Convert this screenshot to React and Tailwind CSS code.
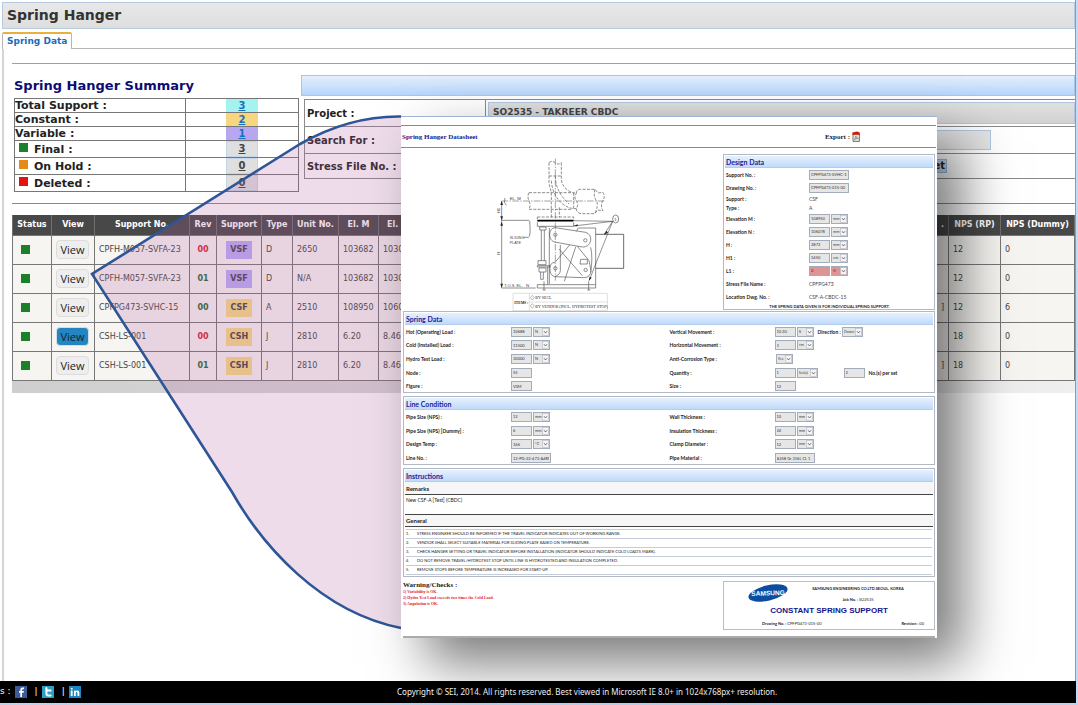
import React from "react";

const SUMMARY = [
  { label: "Total Support :", value: "3", tone: "bg-[#a4f3f0] text-[#1a6fc0]" },
  { label: "Constant :", value: "2", tone: "bg-[#f6d77f] text-[#1a6fc0]" },
  { label: "Variable :", value: "1", tone: "bg-[#b9a6f3] text-[#1a6fc0]" },
];

const STATES = [
  { label: "Final :", value: "3", dot: "bg-[#1e7f2c]" },
  { label: "On Hold :", value: "0", dot: "bg-[#e68a17]" },
  { label: "Deleted :", value: "0", dot: "bg-[#e01414]" },
];

const ROWS = [
  { no: "CPFH-M057-SVFA-23", rev: "00", red: true, sup: "VSF", type: "D", unit: "2650", m: "103682", n: "1030", dwg: "", rp: "12", dummy: "0" },
  { no: "CPFH-M057-SVFA-23", rev: "01", red: false, sup: "VSF", type: "D", unit: "N/A", m: "103682", n: "1030", dwg: "", rp: "12", dummy: "0" },
  { no: "CPFPG473-SVHC-15", rev: "00", red: false, sup: "CSF", type: "A", unit: "2510", m: "108950", n: "1060", dwg: "]", rp: "12", dummy: "6" },
  { no: "CSH-LS-001", rev: "00", red: true, sup: "CSH", type: "J", unit: "2810", m: "6.20", n: "8.46", dwg: "", rp: "18", dummy: "0", active: true },
  { no: "CSH-LS-001", rev: "01", red: false, sup: "CSH", type: "J", unit: "2810", m: "6.20", n: "8.46", dwg: "]", rp: "18", dummy: "0" },
];

const COLUMNS = [
  ["Status", "w-[39px] text-center"],
  ["View", "w-[43px] text-center"],
  ["Support No.", "w-[95px] text-center"],
  ["Rev", "w-[27px] text-center"],
  ["Support", "w-[45px] text-center"],
  ["Type", "w-[31px] text-center"],
  ["Unit No.", "w-[46px] text-center"],
  ["El. M", "w-[40px] text-center"],
  ["El.", "pl-2 text-left"],
  [".", "w-[30px] pr-1 text-right"],
  ["NPS (RP)", "w-[52px] text-center"],
  ["NPS (Dummy)", "w-[74px] text-center"],
];

const NOTES = [
  "STRESS ENGINEER SHOULD BE INFORMED IF THE TRAVEL INDICATOR INDICATES OUT OF WORKING RANGE.",
  "VENDOR SHALL SELECT SUITABLE MATERIAL FOR SLIDING PLATE BASED ON TEMPERATURE.",
  "CHECK HANGER SETTING OR TRAVEL INDICATOR BEFORE INSTALLATION (INDICATOR SHOULD INDICATE COLD LOAD'S MARK).",
  "DO NOT REMOVE TRAVEL/HYDROTEST STOP UNTIL LINE IS HYDROTESTED AND INSULATION COMPLETED.",
  "REMOVE STOPS BEFORE TEMPERATURE IS INCREASED FOR START-UP.",
];

function Box({ id, value, width = "w-[21px]", red }) {
  return (
    <input
      id={id}
      defaultValue={value}
      className={`h-[10px] ${width} border border-[#a3acba] px-px text-[4px] ${red ? "bg-[#df9494]" : "bg-[#e6e6e6]"} text-[#333]`}
    />
  );
}

function Pick({ label, value, width = "w-[17px]", red }) {
  return (
    <span className={`relative ml-px flex h-[10px] ${width}`}>
      <select
        aria-label={label}
        className={`w-full appearance-none border border-[#a3acba] pl-px text-[4px] ${red ? "bg-[#df9494]" : "bg-[#e6e6e6]"} text-[#444]`}
      >
        <option>{value}</option>
      </select>
      <svg viewBox="0 0 7 8" className="pointer-events-none absolute top-px right-px h-[8px] w-[7px]">
        <rect x="0.5" y="0.5" width="6" height="7" fill="#f4f4f4" stroke="#b4bac4" strokeWidth="0.6" />
        <path d="M2 3.2 3.5 5 5 3.2" fill="none" stroke="#555" strokeWidth="0.8" />
      </svg>
    </span>
  );
}

function Field({ id, label, value, width, unit, unitWidth, red, plain, labelWidth = "w-[105px]", children }) {
  return (
    <div className="flex items-center">
      {plain ? (
        <span className={`${labelWidth} shrink-0 font-bold`}>{label}</span>
      ) : (
        <label htmlFor={id} className={`${labelWidth} shrink-0 font-bold`}>
          {label}
        </label>
      )}
      {plain && value && <span className="text-[#444]">{value}</span>}
      {!plain && value && <Box id={id} value={value} width={width} red={red} />}
      {unit && <Pick label={`${label} unit`} value={unit} width={unitWidth} red={red} />}
      {children}
    </div>
  );
}

function Panel({ title, children, className = "" }) {
  return (
    <section className={`border border-[#b3b9c4] p-px ${className}`}>
      <h3 className="h-[12px] border-b border-[#b5cdec] bg-linear-to-b from-[#e6f1fd] to-[#c0dafb] pl-px text-[7px] leading-[12px] font-bold text-[#22229a]">
        {title}
      </h3>
      {children}
    </section>
  );
}

function Drawing() {
  return (
    <svg viewBox="0 0 450 480" className="h-[160px] w-[150px]" fill="none" stroke="#555" strokeWidth="2">
      <g strokeDasharray="9 4">
        <path d="M180 26V85C180 100 187 105 187 120V190M217 26V75C218 100 240 116 262 118" />
        <path d="M199 66C199 110 225 135 240 150M187 80C190 130 225 166 262 164" />
        <path d="M180 26q9-8 18 0q9 8 19 0M180 66h37" />
        <path d="M120 116H250M120 166H250M120 116q-6 12 0 25q6 12 0 25M254 116v50M211 160v30" />
        <path d="M262 118Q262 106 274 106H318L327 117L342 115Q350 130 340 142Q334 158 342 170L326 168L317 179H276Q262 176 262 164Q270 150 262 141Q254 130 262 118Z" />
        <path d="M145 189H254V200H145ZM318 106q-6 20 4 34q8 14-5 39" />
      </g>
      <path d="M199 14V380M38 141H350" strokeDasharray="20 4 4 4" strokeWidth="1.6" />
      <path d="M145 200h108" stroke="#000" strokeWidth="5" />
      <path d="M145 205V217H254V205M152 219h19v9h-19zM157 228V320M166 228V320M147 320h24v12h-24zM145 335h38v4h-38zM150 342h21v12h-21zM155 354v22h8v-22M176 338V392M181 222V390M145 392H320V402H145ZM320 222V392M268 222H320M268 222l-6 10" />
      <path d="M198 221L290 235Q307 240 305 260Q300 280 280 279L196 264Q181 258 182 240Q184 222 198 221Z" />
      <circle cx="199" cy="242" r="5" />
      <circle cx="289" cy="259" r="5" />
      <circle cx="199" cy="343" r="5" />
      <circle cx="290" cy="348" r="5" />
      <path d="M183 340Q184 326 198 325L242 273M183 340Q181 362 196 368L285 371Q305 370 306 350L300 320L265 277M214 273V350Q213 362 199 367M260 279L226 382M210 285L280 365M275 316h20v14h-22zM305 280Q312 310 305 355" />
      <path d="M320 241H404V343H320" stroke="#222" />
      <path d="M38 199H120M38 141V402M38 402H140M122 200Q126 250 118 250H104" />
      <path d="M371 202L254 216M371 202L254 200M371 202L346 240M371 202L301 378" stroke="#333" strokeWidth="1.6" />
      <path d="M254 216l12-5v6zM344 243l9-13 4 6zM299 382l3-14 6 3zM38 141l-4 12h8zM38 199l-4-12h8zM38 203l-4 12h8zM38 401l-4-12h8z" fill="#222" stroke="none" />
      <ellipse cx="380" cy="195" rx="9" ry="12" />
      <path d="M165 382V408M161 408h9M299 382V408M295 408h9M48 132q-6 14 4 22" />
      <g fill="#444" stroke="none" fontFamily="Liberation Sans" fontSize="13">
        <text x="62" y="138">EL. M</text>
        <text x="62" y="255" fontSize="11">SLIDING</text>
        <text x="62" y="269" fontSize="11">PLATE</text>
        <text x="46" y="398" fontSize="12">T.O.S. EL.</text>
        <text x="111" y="398">N</text>
        <text x="376" y="200">1</text>
        <text transform="translate(33 178) rotate(-90)">H1</text>
        <text transform="translate(33 302) rotate(-90)">H</text>
      </g>
      <g stroke="#d0d0d0">
        <path d="M72 418H355V470H72ZM121 418V470M121 444H355" />
      </g>
      <g stroke="#555" strokeWidth="1.2">
        <path d="M130 424l6 7-6 7-6-7zM130 449l6 7-6 7-6-7z" />
      </g>
      <g fill="#222" stroke="none" fontFamily="Liberation Serif" fontSize="12">
        <text x="76" y="450" fontWeight="bold" fontSize="11">ITEMS :</text>
        <text x="139" y="436">BY SECL</text>
        <text x="139" y="461">BY VENDOR (INCL. HYDROTEST STOP)</text>
      </g>
    </svg>
  );
}

function Datasheet() {
  return (
    <article
      aria-label="Spring Hanger Datasheet"
      className="absolute top-[116px] left-[401px] flex h-[522px] w-[536px] flex-col border-t border-[#9fb3d6] bg-white font-[Lato,sans-serif] text-[5px] leading-[8px] text-[#222] shadow-[25px_25px_50px_rgba(0,0,0,0.52)]"
    >
      <header className="mt-2 mr-px flex h-[23px] items-center justify-between border-y border-[#8a8a8a] font-['Liberation_Serif',serif]">
        <h2 className="pl-px text-[7px] font-bold text-[#22228c]">Spring Hanger Datasheet</h2>
        <button type="button" className="mr-[76px] flex items-center gap-[2px] text-[7px] font-bold text-[#222]">
          Export :
          <svg viewBox="0 0 8 11" className="h-[11px] w-[8px]">
            <path d="M1 3H7.4V10.4H1Z" fill="#e8e4e0" stroke="#555" strokeWidth="0.8" />
            <path d="M0.3 1.5 5 0.4 7.8 1.6V3.8H0.3Z" fill="#c4220f" />
            <path d="M2.4 8.6Q4 7 3.7 5Q4.6 7.6 6.3 7.4Q4.2 7.2 2.4 8.6" fill="none" stroke="#666" strokeWidth="0.6" />
          </svg>
        </button>
      </header>

      <div className="mt-[6px] mr-[2px] flex h-[156px]">
        <div className="flex flex-1 items-start justify-center pl-1">
          <Drawing />
        </div>
        <Panel title="Design Data" className="w-[212px]">
          <div className="flex flex-col pl-px [&>*:nth-child(-n+2)]:h-[13px] [&>*:nth-child(n+3)]:h-[9px] [&>*:nth-child(n+5)]:h-[13px] [&>*:nth-child(n+10)]:h-[10px]">
            <Field id="sno" label="Support No. :" value="CPFPG473-SVHC-15" width="w-[40px]" labelWidth="w-[83px]" />
            <Field id="dno" label="Drawing No. :" value="CPFPG473-015-00" width="w-[40px]" labelWidth="w-[83px]" />
            <Field plain label="Support :" value="CSF" labelWidth="w-[83px]" />
            <Field plain label="Type :" value="A" labelWidth="w-[83px]" />
            <Field id="elm" label="Elevation M :" value="108950" unit="mm" labelWidth="w-[83px]" />
            <Field id="eln" label="Elevation N :" value="106078" unit="mm" labelWidth="w-[83px]" />
            <Field id="h" label="H :" value="2872" unit="mm" labelWidth="w-[83px]" />
            <Field id="h1" label="H1 :" value="1450" unit="cm" labelWidth="w-[83px]" />
            <Field id="l1" label="L1 :" value="0" unit="ft" red labelWidth="w-[83px]" />
            <Field plain label="Stress File Name :" value="CPFPG473" labelWidth="w-[83px]" />
            <Field plain label="Location Dwg. No. :" value="CSF-A-CBDC-15" labelWidth="w-[83px]" />
            <p className="text-center text-[4px] font-bold">THE SPRING DATA GIVEN IS FOR INDIVIDUAL SPRING SUPPORT.</p>
          </div>
        </Panel>
      </div>

      <Panel title="Spring Data" className="mt-px mr-[2px] ml-[2px] h-[82px]">
        <div className="grid h-[68px] grid-cols-2 pl-px">
          <div className="grid grid-rows-5">
            <Field id="hot" label="Hot (Operating) Load :" value="10688" unit="N" />
            <Field id="cold" label="Cold (Installed) Load :" value="11500" unit="N" />
            <Field id="hyd" label="Hydro Test Load :" value="30000" unit="N" />
            <Field id="node" label="Node :" value="55" />
            <Field id="fig" label="Figure :" value="VSM" />
          </div>
          <div className="grid grid-rows-5">
            <Field id="ver" label="Vertical Movement :" value="10.30" unit="ft">
              <span className="ml-1 font-bold">Direction :</span>
              <Pick label="Direction" value="Down" width="w-[21px]" />
            </Field>
            <Field id="hor" label="Horizontal Movement :" value="3" unit="cm" />
            <Field plain label="Anti-Corrosion Type :" unit="Yes" />
            <Field id="qty" label="Quantity :" value="1" unit="Set(s)" unitWidth="w-[21px]">
              <span className="ml-[26px] flex">
                <Box id="per" value="2" />
              </span>
              <label htmlFor="per" className="ml-1 font-bold">
                No.(s) per set
              </label>
            </Field>
            <Field id="size" label="Size :" value="12" />
          </div>
        </div>
      </Panel>

      <Panel title="Line Condition" className="mx-[2px] mt-[3px] h-[69px]">
        <div className="grid h-[55px] grid-cols-2 pl-px">
          <div className="grid grid-rows-4">
            <Field id="nps" label="Pipe Size (NPS) :" value="12" unit="mm" />
            <Field id="npsd" label="Pipe Size (NPS) [Dummy] :" value="6" unit="mm" />
            <Field id="temp" label="Design Temp :" value="166" unit="°C" />
            <Field id="line" label="Line No. :" value="12-PG-22-473-A4RM-P" width="w-[40px]" />
          </div>
          <div className="grid grid-rows-4">
            <Field id="wall" label="Wall Thickness :" value="10" unit="mm" />
            <Field id="ins" label="Insulation Thickness :" value="24" unit="mm" />
            <Field id="clamp" label="Clamp Diameter :" value="12" unit="mm" />
            <Field id="mat" label="Pipe Material :" value="A358 Gr 316L CL 1" width="w-[40px]" />
          </div>
        </div>
      </Panel>

      <Panel title="Instructions" className="mx-[2px] mt-[3px] h-[109px]">
        <h4 className="h-[13px] border-b border-[#444] bg-[#f6f6f6] pl-px text-[6px] leading-[13px] font-bold">Remarks</h4>
        <p className="h-[19px] pt-px pl-px">New CSF-A [Test] (CBDC)</p>
        <h4 className="h-[13px] border-y border-[#444] bg-[#f6f6f6] pl-px text-[6px] leading-[11px] font-bold">General</h4>
        <ol className="mx-px mt-[2px] border-t border-[#c3ccd8]">
          {NOTES.map((note, i) => (
            <li key={note} className="flex h-[9px] items-center border-b border-[#c3ccd8] text-[4px]">
              <span className="w-[11px]">{i + 1}.</span>
              {note}
            </li>
          ))}
        </ol>
      </Panel>

      <div className="mt-[4px] mr-[2px] ml-[2px] flex flex-1 justify-between border-b-2 border-[#ababab]">
        <div className="font-['Liberation_Serif',serif] text-[4px] leading-[6px] font-bold text-[#e21d1d]">
          <h4 className="text-[7px] leading-[8px] text-[#222]">Warning/Checks :</h4>
          <p>1) Variability is OK.</p>
          <p>2) Hydro Test Load exceeds two times the Cold Load.</p>
          <p>3) Angulation is OK.</p>
        </div>
        <div className="flex h-[49px] w-[212px] flex-col border border-[#b8bec8] px-[6px] text-[4px] font-bold">
          <div className="flex h-[22px] pl-[18px]">
            <svg viewBox="0 0 40 20" className="mt-px h-[20px] w-[40px]">
              <ellipse cx="20" cy="10" rx="20" ry="7.6" fill="#0c4da2" transform="rotate(-13 20 10)" />
              <text x="20" y="12.4" textAnchor="middle" fontFamily="Liberation Sans" fontWeight="bold" fontSize="6.6" fill="#fff" transform="rotate(-2 20 10)">
                SAMSUNG
              </text>
            </svg>
            <div className="flex flex-1 flex-col items-center pt-px leading-[11px]">
              <span>SAMSUNG ENGINEERING CO.LTD.SEOUL, KOREA</span>
              <span>
                Job No. : <span className="font-normal">SO2535</span>
              </span>
            </div>
          </div>
          <strong className="text-center font-['Liberation_Sans',sans-serif] text-[8px] leading-[14px] text-[#14148c]">CONSTANT SPRING SUPPORT</strong>
          <div className="flex justify-between pr-[4px] pl-[32px] leading-[11px]">
            <span>
              Drawing No. : <span className="font-normal">CPFPG473-015-00</span>
            </span>
            <span>
              Revision : <span className="font-normal">00</span>
            </span>
          </div>
        </div>
      </div>
    </article>
  );
}

function Callout() {
  return (
    <svg className="pointer-events-none absolute top-0 left-0 h-[705px] w-[410px]" viewBox="0 0 410 705">
      <path
        d="M410 116H401C365 116 330 127 300 144L92 274L232 492C262 545 320 612 401 628H410Z"
        fill="rgb(178,96,159)"
        fillOpacity="0.22"
      />
      <path d="M401 116.5C365 116 330 127 300 144L92 274L232 492C262 545 320 612 401 628" fill="none" stroke="#2d5597" strokeWidth="2.6" />
    </svg>
  );
}

export default function App() {
  return (
    <div className="relative flex min-h-screen flex-col overflow-hidden bg-[#c5dbf5] font-['DejaVu_Sans',sans-serif] text-[#222]">
      <div className="mr-[2px] flex flex-1 flex-col border-r border-[#8c9bb0] bg-white pt-[2px] pl-[2px]">
        <header className="flex h-[27px] items-center border border-[#b5cbe2] bg-linear-to-b from-[#e8e8e8] to-[#dedede] pl-1">
          <h1 className="text-[14px] font-bold text-[#333]">Spring Hanger</h1>
        </header>
        <nav className="mt-[3px] flex h-[17px] items-stretch">
          <a href="#spring" className="flex items-center rounded-t-[2px] border-t-2 border-r border-l border-[#b5b5b5] border-t-[#e9b13c] px-1 text-[9px] font-bold text-[#1c6cb8]">
            Spring Data
          </a>
          <span className="flex-1 border-b border-[#b5b5b5]" />
        </nav>

        <main id="spring" className="flex flex-1 flex-col border-l-2 border-[#d5d5d5] pt-[14px] pl-2">
          <hr className="border-[#a0a0a0]" />
          <div className="mt-[11px] flex">
            <section className="w-[289px] pl-[2px]">
              <h2 className="h-[23px] text-[13px] leading-[22px] font-bold text-[#0c0c74]">Spring Hanger Summary</h2>
              <table className="w-[285px] table-fixed border-collapse text-[10px] leading-[13px] font-bold">
                <tbody>
                  {SUMMARY.map((r) => (
                    <tr key={r.label} className="h-[14px]">
                      <td className="w-[171px] border border-[#777] p-0 text-[11px]">{r.label}</td>
                      <td className="border border-[#777] p-0">
                        <a href="#list" className={`mx-auto block w-[32px] text-center underline ${r.tone}`}>
                          {r.value}
                        </a>
                      </td>
                    </tr>
                  ))}
                  {STATES.map((r) => (
                    <tr key={r.label} className="h-[17px]">
                      <td className="border border-[#777] p-0 text-[11px]">
                        <span className="flex items-center gap-[6px] pl-1">
                          <span className={`mb-[3px] h-[9px] w-[9px] ${r.dot}`} />
                          {r.label}
                        </span>
                      </td>
                      <td className="border border-[#777] p-0">
                        <a href="#list" className="mx-auto block w-[32px] border border-[#c3d5e6] bg-[#dfdfdf] text-center leading-[14px] text-[#444] underline">
                          {r.value}
                        </a>
                      </td>
                    </tr>
                  ))}
                </tbody>
              </table>
            </section>

            <section className="flex-1">
              <div className="h-[21px] border border-[#a9c6ea] bg-linear-to-b from-[#e3effd] to-[#b7d5fa]" />
              <form className="mt-[3px] ml-[3px] border-t border-l border-[#8a8a8a] text-[10px] font-bold">
                <div className="flex h-[27px] items-stretch border-b border-[#8a8a8a]">
                  <label htmlFor="project" className="flex w-[181px] items-center border-r border-[#8a8a8a] pl-[2px]">
                    Project :
                  </label>
                  <select id="project" className="my-[2px] ml-[2px] flex-1 appearance-none border border-[#b0c6e2] bg-linear-to-b from-[#e0e0e0] to-[#d2d2d2] pl-1 text-[9px] text-[#444]">
                    <option>SO2535 - TAKREER CBDC</option>
                  </select>
                </div>
                <div className="flex h-[27px] items-center border-b border-[#8a8a8a]">
                  <label htmlFor="search" className="w-[184px] pl-[2px]">
                    Search For :
                  </label>
                  <input id="search" className="mr-[84px] h-[20px] flex-1 border border-[#b0c6e2] bg-[#e4e4e4]" />
                </div>
                <div className="flex h-[25px] items-center border-b border-[#8a8a8a]">
                  <label htmlFor="stress" className="w-[184px] pl-[2px]">
                    Stress File No. :
                  </label>
                  <span className="flex-1" />
                  <button id="stress" type="button" className="mr-[128px] h-[14px] border border-[#9dbce0] bg-[#c9dcf3] px-px leading-[12px] font-bold">
                    et
                  </button>
                </div>
              </form>
            </section>
          </div>

          <hr className="mt-[11px] border-[#8a8a8a]" />

          <table id="list" className="mt-[11px] w-full table-fixed border-collapse text-[8px]">
            <thead>
              <tr className="h-[20px] bg-[#484848] text-white">
                {COLUMNS.map(([name, cls]) => (
                  <th key={name} className={`border-x border-[#707070] p-0 font-bold whitespace-nowrap ${cls}`}>
                    {name}
                  </th>
                ))}
              </tr>
            </thead>
            <tbody>
              {ROWS.map((r, i) => (
                <tr key={i} className="h-[29px] bg-[#f7f5f2] text-[#444] [&>td]:border [&>td]:border-[#777] [&>td]:px-1 [&>td]:py-0">
                  <td>
                    <span className="ml-1 block h-[9px] w-[9px] bg-[#1c7f2a]" />
                  </td>
                  <td>
                    <button
                      type="button"
                      className={`block h-[19px] w-[33px] rounded-[4px] border font-['Open_Sans',sans-serif] text-[11px] leading-[17px] ${
                        r.active ? "border-[#cfe0ee] bg-[#2485c1] text-[#123]" : "border-[#dcdcdc] bg-[#eeeeee] text-[#222]"
                      }`}
                    >
                      View
                    </button>
                  </td>
                  <td className="whitespace-nowrap">{r.no}</td>
                  <td className={`text-center font-bold ${r.red ? "text-[#dc2030]" : "text-[#1c6a34]"}`}>{r.rev}</td>
                  <td>
                    <span className={`mx-auto block h-[18px] w-[26px] text-center leading-[18px] font-bold ${r.sup === "VSF" ? "bg-[#baacf7]" : "bg-[#f7db86]"}`}>
                      {r.sup}
                    </span>
                  </td>
                  <td>{r.type}</td>
                  <td>{r.unit}</td>
                  <td>{r.m}</td>
                  <td>{r.n}</td>
                  <td className="text-right">{r.dwg}</td>
                  <td>{r.rp}</td>
                  <td>{r.dummy}</td>
                </tr>
              ))}
            </tbody>
          </table>
          <div className="h-[12px] bg-linear-to-r from-[#cecece] to-[#efefef]" />
        </main>
      </div>

      <footer className="mr-[2px] flex h-[22px] items-center bg-black text-[8px] text-white">
        <div className="flex w-[397px] items-center gap-[8px] text-[9px]">
          <span>s :</span>
          <a href="#facebook" aria-label="Facebook" className="-ml-1">
            <svg viewBox="0 0 12 12" className="h-[12px] w-[12px]">
              <rect width="12" height="12" fill="#3d5a9a" />
              <path d="M7 11V6.7H8.6L8.9 5H7V4Q7 3.2 8 3.2H9V1.6H7.4Q5.3 1.6 5.3 3.7V5H4V6.7H5.3V11Z" fill="#fff" />
            </svg>
          </a>
          <span>|</span>
          <a href="#twitter" aria-label="Twitter" className="-ml-1">
            <svg viewBox="0 0 12 12" className="h-[12px] w-[12px]">
              <rect width="12" height="12" fill="#2c9fc4" />
              <path d="M4.4 2V7.4Q4.4 9.4 6.4 9.4H8.6M4.4 4.6H8.6" fill="none" stroke="#fff" strokeWidth="2" strokeLinecap="round" />
            </svg>
          </a>
          <span>|</span>
          <a href="#linkedin" aria-label="LinkedIn" className="-ml-1">
            <svg viewBox="0 0 12 12" className="h-[12px] w-[12px]">
              <rect width="12" height="12" fill="#1c87bd" />
              <path d="M1.8 4.6H3.6V10H1.8ZM1.8 2H3.6V3.6H1.8ZM5 4.6H6.7V5.3Q7.2 4.5 8.3 4.5Q10.3 4.5 10.3 6.8V10H8.5V7.2Q8.5 6 7.7 6Q6.8 6 6.8 7.2V10H5Z" fill="#fff" />
            </svg>
          </a>
        </div>
        <p className="font-['Noto_Sans',sans-serif]">Copyright © SEI, 2014. All rights reserved. Best viewed in Microsoft IE 8.0+ in 1024x768px+ resolution.</p>
      </footer>
      <div className="h-[2px] bg-[#bcd3f0]" />
      <Callout />
      <Datasheet />
    </div>
  );
}
